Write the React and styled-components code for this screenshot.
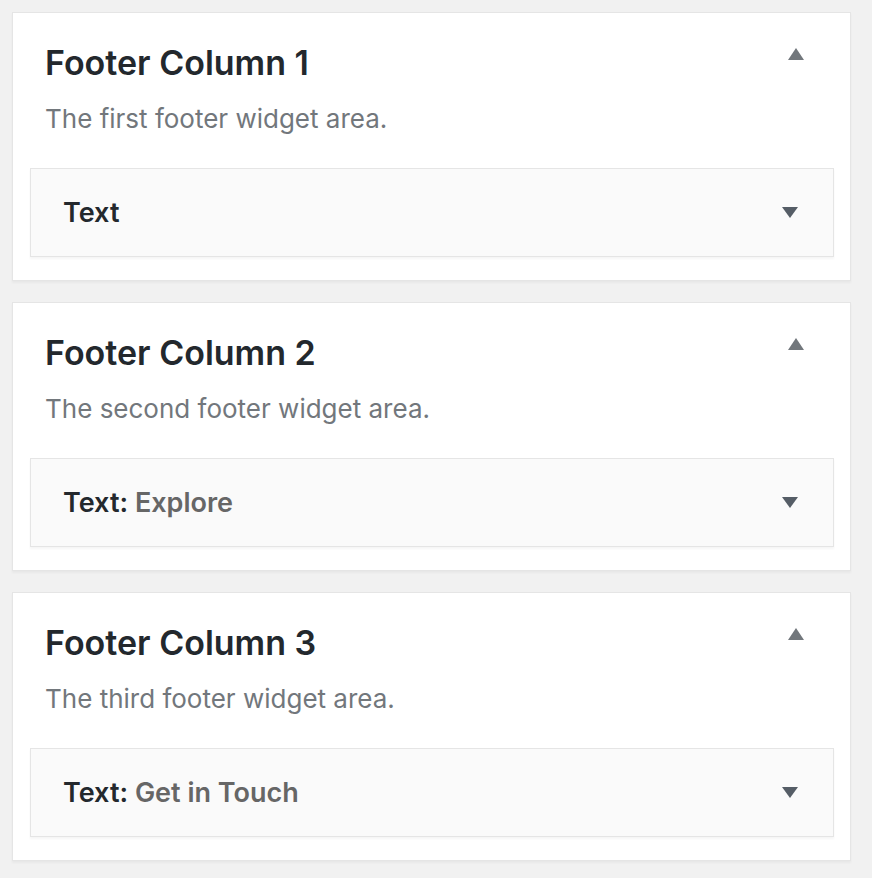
import React from "react";
import styled, { createGlobalStyle } from "styled-components";

const GlobalStyle = createGlobalStyle`
  html, body {
    margin: 0;
    padding: 0;
    background: #f1f1f1;
  }
  body {
    font-family: Inter, "Noto Sans", "Liberation Sans", sans-serif;
  }
`;

const areas = [
  { title: "Footer Column 1", description: "The first footer widget area.", widget: "Text", name: "" },
  { title: "Footer Column 2", description: "The second footer widget area.", widget: "Text", name: "Explore" },
  { title: "Footer Column 3", description: "The third footer widget area.", widget: "Text", name: "Get in Touch" },
];

function Arrow({ up }) {
  return (
    <ArrowIcon viewBox="0 0 16 12" width="16" height={up ? 12 : 11} $up={up} preserveAspectRatio="none">
      {up ? <polygon points="8,0 16,12 0,12" /> : <polygon points="0,0 16,0 8,12" />}
    </ArrowIcon>
  );
}

export default function App() {
  return (
    <>
      <GlobalStyle />
      <Page>
        {areas.map((area) => (
          <Sidebar key={area.title}>
            <SidebarHeader>
              <SidebarTitle>{area.title}</SidebarTitle>
              <HeaderToggle>
                <Arrow up />
              </HeaderToggle>
            </SidebarHeader>
            <Description>{area.description}</Description>
            <Widget>
              <WidgetTitle>
                {area.widget}
                {area.name && (
                  <>
                    : <InWidgetTitle>{area.name}</InWidgetTitle>
                  </>
                )}
              </WidgetTitle>
              <WidgetToggle>
                <Arrow />
              </WidgetToggle>
            </Widget>
          </Sidebar>
        ))}
      </Page>
    </>
  );
}

const Page = styled.div`
  display: flex;
  flex-direction: column;
  gap: 21px;
  padding: 12px 21px 16px 12px;
`;

const Sidebar = styled.section`
  background: #fff;
  border: 1px solid #e5e5e5;
  box-shadow: 0 2px 2px rgba(0, 0, 0, 0.04);
  padding: 0 16px 23px 17px;
`;

const SidebarHeader = styled.div`
  display: flex;
  align-items: center;
  justify-content: space-between;
  padding: 30px 0 0 15px;
`;

const SidebarTitle = styled.h2`
  margin: 0;
  font-size: 34px;
  line-height: 40px;
  font-weight: 600;
  color: #23282d;
`;

const HeaderToggle = styled.span`
  display: flex;
  align-self: flex-start;
  margin: 5px 30px 0 0;
`;

const Description = styled.p`
  margin: 18px 0 0 15px;
  font-size: 26px;
  line-height: 36px;
  color: #72777c;
`;

const Widget = styled.div`
  display: flex;
  align-items: center;
  justify-content: space-between;
  height: 87px;
  margin-top: 31px;
  padding: 0 35px 0 32px;
  background: #fafafa;
  border: 1px solid #e5e5e5;
  box-shadow: 0 2px 2px rgba(0, 0, 0, 0.04);
`;

const WidgetTitle = styled.h3`
  margin: 0;
  font-size: 27px;
  line-height: 32px;
  font-weight: 600;
  color: #23282d;
`;

const InWidgetTitle = styled.span`
  color: #666;
`;

const WidgetToggle = styled.span`
  display: flex;
`;

const ArrowIcon = styled.svg`
  display: block;
  fill: ${(p) => (p.$up ? "#72777c" : "#555d66")};
`;
